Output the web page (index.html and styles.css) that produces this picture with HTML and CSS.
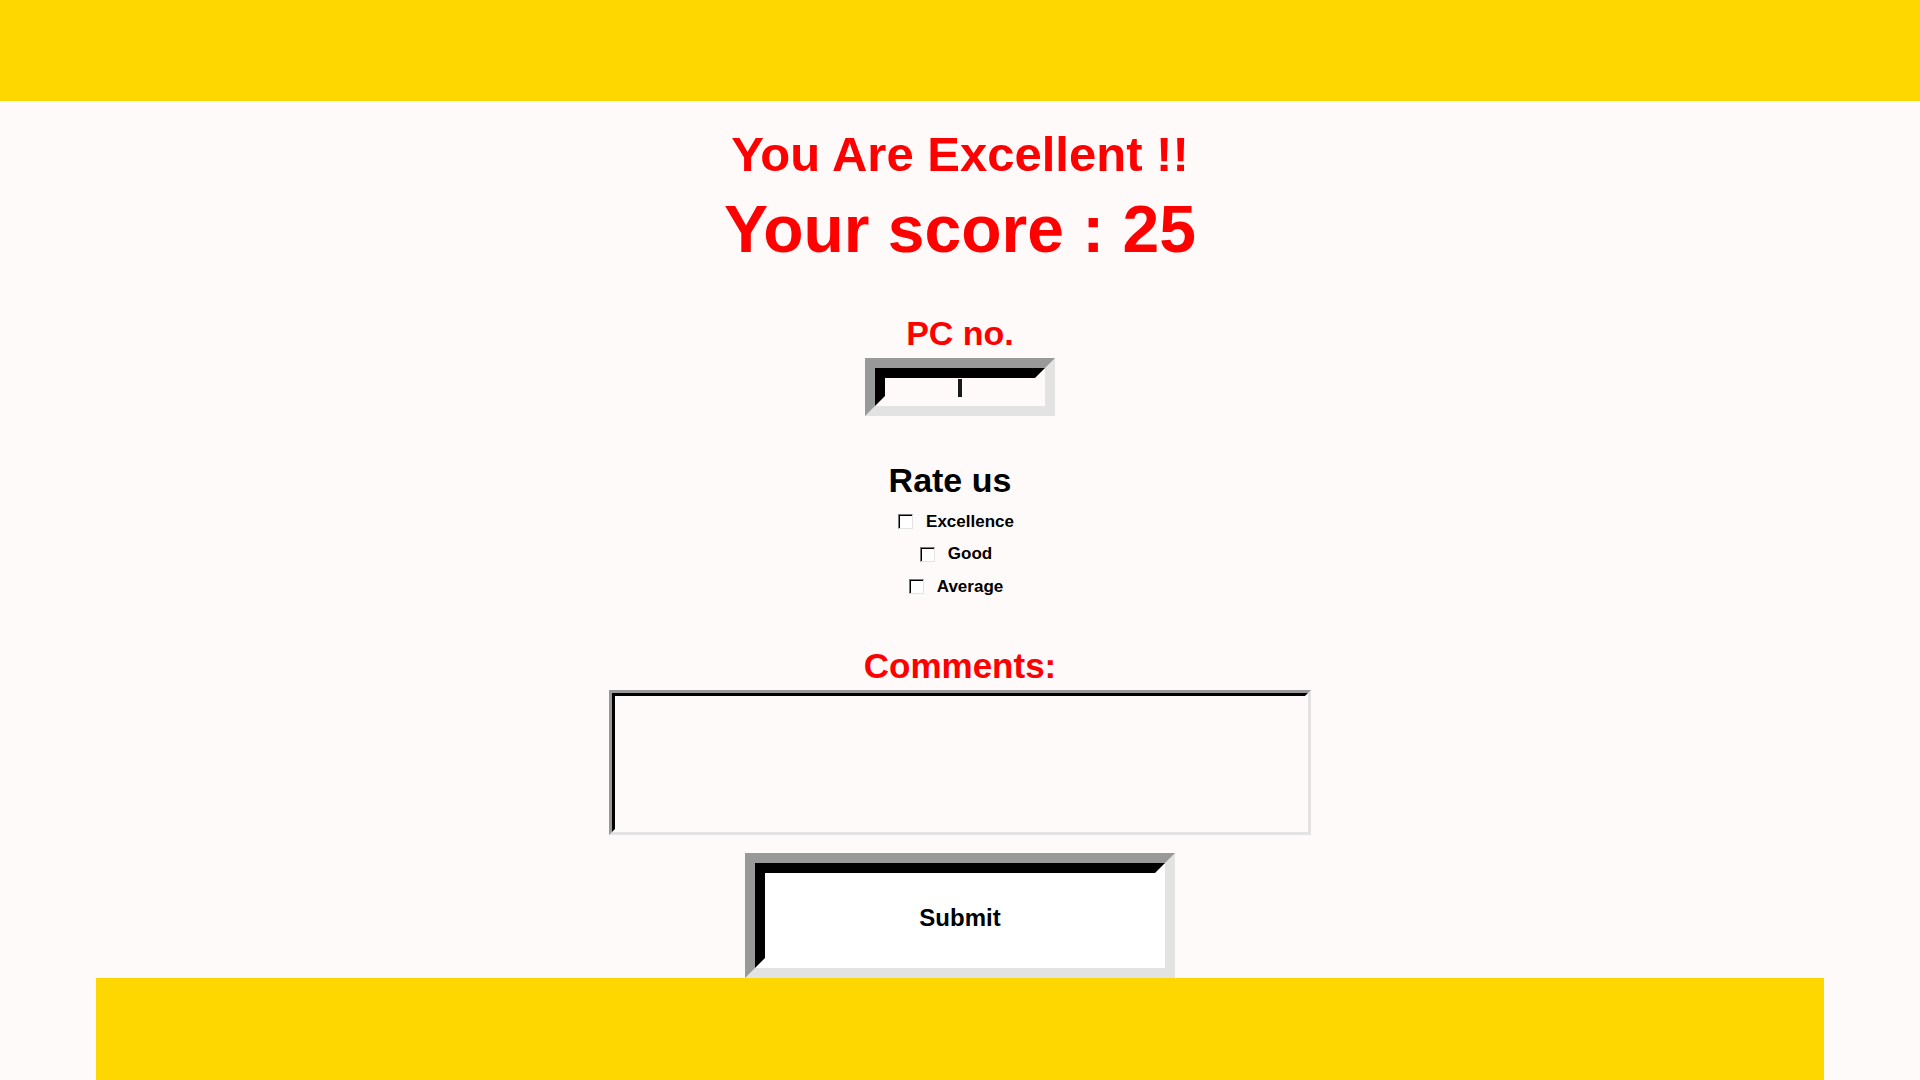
FILE: index.html
```html
<!DOCTYPE html>
<html lang="en">
<head>
<meta charset="utf-8">
<title>Result</title>
<link rel="stylesheet" href="styles.css">
</head>
<body>
<header class="topbar"></header>
<main class="content">
  <h1 class="title">You Are Excellent !!</h1>
  <h2 class="score">Your score : 25</h2>
  <label class="field-label pc-label" for="pc">PC no.</label>
  <span class="bevel-outer pc-box"><span class="bevel-inner pc-inner"><input id="pc" class="pc-input" type="text"><span class="caret"></span></span></span>
  <h3 class="rate-title">Rate us</h3>
  <div class="rate-list">
    <label class="rate-row"><input type="checkbox" class="check"><span class="rate-text">Excellence</span></label>
    <label class="rate-row"><input type="checkbox" class="check"><span class="rate-text">Good</span></label>
    <label class="rate-row"><input type="checkbox" class="check"><span class="rate-text">Average</span></label>
  </div>
  <label class="field-label comments-label" for="comments">Comments:</label>
  <span class="thin-outer"><span class="thin-inner"><textarea id="comments" class="comments"></textarea></span></span>
  <button class="submit" type="button"><span class="submit-inner">Submit</span></button>
</main>
<footer class="footbar"></footer>
</body>
</html>
```
FILE: styles.css
```css
html, body {
  margin: 0;
  padding: 0;
}
body {
  background: #fffafa;
  font-family: "Liberation Sans", Arial, sans-serif;
  font-weight: bold;
}
.topbar {
  height: 101px;
  background: #ffd700;
}
.content {
  display: flex;
  flex-direction: column;
  align-items: center;
}
.title {
  margin: 28.5px 0 0;
  font-size: 49px;
  line-height: 49px;
  color: #ff0000;
}
.score {
  margin: 17.5px 0 0;
  font-size: 66px;
  line-height: 66px;
  color: #ff0000;
}
.field-label {
  display: block;
  color: #ff0000;
}
.pc-label {
  margin-top: 54px;
  font-size: 34px;
  line-height: 34px;
}
.bevel-outer {
  display: block;
  border: 10px solid;
  border-color: #999999 #e3e3e3 #e3e3e3 #999999;
}
.bevel-inner {
  display: block;
  border: 10px solid;
  border-color: #000000 #fffafa #fffafa #000000;
}
.pc-box {
  margin-top: 8px;
  width: 170px;
}
.pc-inner {
  position: relative;
  height: 18px;
}
.pc-input {
  display: block;
  width: 100%;
  height: 18px;
  border: 0;
  padding: 0;
  margin: 0;
  background: #fffafa;
  outline: none;
}
.caret {
  position: absolute;
  left: 73px;
  top: 1px;
  width: 4px;
  height: 18px;
  background: #1a1a1a;
}
.rate-title {
  margin: 47px 0 0;
  padding-right: 20px;
  font-size: 34px;
  line-height: 34px;
  color: #000000;
}
.rate-list {
  margin-top: 8.5px;
  display: flex;
  flex-direction: column;
  align-items: center;
}
.rate-row {
  display: flex;
  align-items: center;
  height: 32.5px;
  padding-right: 8px;
  font-size: 17px;
  color: #000000;
}
.check {
  appearance: none;
  -webkit-appearance: none;
  box-sizing: border-box;
  width: 15px;
  height: 15px;
  margin: 0;
  border: 1px solid;
  border-color: #7a7a7a #e3e3e3 #e3e3e3 #7a7a7a;
  box-shadow: inset 1px 1px 0 #000000;
  background: #ffffff;
}
.rate-text {
  margin-left: 13px;
}
.comments-label {
  margin-top: 44.5px;
  font-size: 35px;
  line-height: 35px;
}
.thin-outer {
  display: block;
  margin-top: 7.5px;
  border: 3px solid;
  border-color: #999999 #e3e3e3 #e3e3e3 #999999;
}
.thin-inner {
  display: block;
  border: 3px solid;
  border-color: #000000 #fffafa #fffafa #000000;
}
.comments {
  display: block;
  width: 690px;
  height: 133px;
  border: 0;
  padding: 0;
  margin: 0;
  resize: none;
  background: #fffafa;
  outline: none;
}
.submit {
  display: block;
  margin-top: 18px;
  width: 430px;
  height: 125px;
  padding: 0;
  border: 10px solid;
  border-color: #999999 #e3e3e3 #e3e3e3 #999999;
  background: #ffffff;
  font-family: inherit;
  cursor: pointer;
}
.submit-inner {
  display: flex;
  align-items: center;
  justify-content: center;
  height: 100%;
  box-sizing: border-box;
  padding-top: 4px;
  border: 10px solid;
  border-color: #000000 #ffffff #ffffff #000000;
  font-size: 24px;
  font-weight: bold;
  color: #000000;
}
.footbar {
  width: 90%;
  height: 102px;
  margin: 0 auto;
  background: #ffd700;
}
```
